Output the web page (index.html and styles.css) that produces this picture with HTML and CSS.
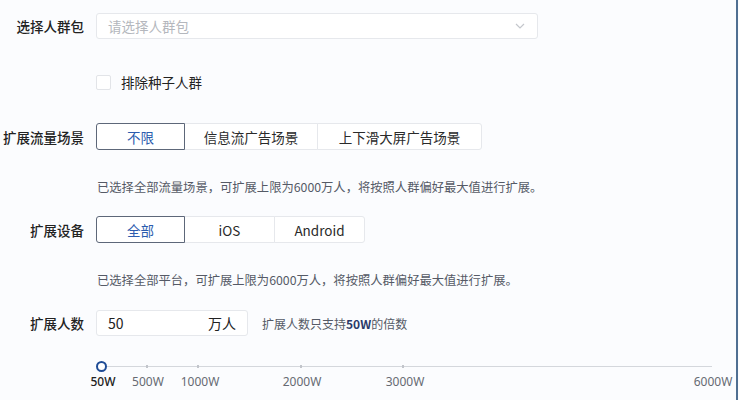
FILE: index.html
```html
<!DOCTYPE html>
<html lang="zh">
<head>
<meta charset="utf-8">
<link rel="stylesheet" href="styles.css">
</head>
<body>
<div class="page">
  <div class="row r-select">
    <div class="label">选择人群包</div>
    <div class="select">
      <span class="placeholder">请选择人群包</span>
      <svg class="chev" width="10" height="6" viewBox="0 0 10 6"><path d="M1 1 L5 5 L9 1" fill="none" stroke="#c4c7cc" stroke-width="1.2"/></svg>
    </div>
  </div>

  <div class="row r-check">
    <div class="label"></div>
    <label class="check"><span class="box"></span><span>排除种子人群</span></label>
  </div>

  <div class="row r-scene">
    <div class="label">扩展流量场景</div>
    <div class="btn-group">
      <div class="btn active w89">不限</div>
      <div class="btn w133">信息流广告场景</div>
      <div class="btn w164">上下滑大屏广告场景</div>
    </div>
  </div>
  <div class="help h1">已选择全部流量场景，可扩展上限为6000万人，将按照人群偏好最大值进行扩展。</div>

  <div class="row r-device">
    <div class="label">扩展设备</div>
    <div class="btn-group">
      <div class="btn active w89">全部</div>
      <div class="btn w90">iOS</div>
      <div class="btn w90">Android</div>
    </div>
  </div>
  <div class="help h2">已选择全部平台，可扩展上限为6000万人，将按照人群偏好最大值进行扩展。</div>

  <div class="row r-count">
    <div class="label">扩展人数</div>
    <div class="num-input"><span class="val">50</span><span class="unit">万人</span></div>
    <div class="hint">扩展人数只支持<span class="strong">50W</span>的倍数</div>
  </div>

  <div class="slider">
    <div class="track"></div>
    <span class="dot" style="left:50px"></span>
    <span class="dot" style="left:101px"></span>
    <span class="dot" style="left:204px"></span>
    <span class="dot" style="left:306px"></span>
    <span class="handle"></span>
    <span class="mark first" style="left:7px">50W</span>
    <span class="mark" style="left:52px">500W</span>
    <span class="mark" style="left:104px">1000W</span>
    <span class="mark" style="left:206px">2000W</span>
    <span class="mark" style="left:309px">3000W</span>
    <span class="mark" style="left:617px">6000W</span>
  </div>
</div>
</body>
</html>
```

FILE: styles.css
```css
html, body {
  margin: 0;
  padding: 0;
  background: #fbfcfe;
}
body {
  font-family: "Noto Sans CJK SC", "Noto Sans", sans-serif;
  color: #222;
}
.page {
  width: 738px;
  height: 400px;
  border-right: 2px solid #4f6f92;
  padding-top: 13px;
  box-sizing: border-box;
  overflow: hidden;
}
.row {
  display: flex;
  align-items: center;
}
.label {
  width: 84px;
  flex: none;
  margin-right: 12px;
  text-align: right;
  font-size: 13.5px;
  font-weight: 500;
  color: #222;
  white-space: nowrap;
}
.r-select { height: 26px; }
.select {
  width: 442px;
  height: 26px;
  box-sizing: border-box;
  border: 1px solid #e6e8ec;
  border-radius: 3px;
  background: #fff;
  display: flex;
  align-items: center;
  justify-content: space-between;
  padding: 0 12px 0 11px;
}
.placeholder {
  font-size: 13.5px;
  color: #b4b7bd;
}
.r-check { margin-top: 36px; height: 14px; }
.check {
  display: flex;
  align-items: center;
  gap: 10px;
  font-size: 13.5px;
  color: #222;
}
.box {
  width: 13px;
  height: 13px;
  border: 1px solid #e2e4e8;
  border-radius: 2px;
  background: #fff;
}
.r-scene { margin-top: 34px; height: 27px; }
.r-device { margin-top: 21px; height: 27px; }
.btn-group { display: flex; }
.btn {
  height: 27px;
  box-sizing: border-box;
  border: 1px solid #e6e8ec;
  background: #fff;
  display: flex;
  align-items: center;
  justify-content: center;
  font-size: 13.5px;
  color: #2a2a2a;
  margin-left: -1px;
}
.btn:first-child { margin-left: 0; border-radius: 3px 0 0 3px; }
.btn:last-child { border-radius: 0 3px 3px 0; }
.btn.active {
  border-color: #5d6779;
  color: #2c5cae;
  position: relative;
  z-index: 1;
}
.w89 { width: 89px; }
.w90 { width: 91px; }
.w133 { width: 134px; }
.w164 { width: 165px; }
.help {
  margin-left: 97px;
  font-size: 12.3px;
  line-height: 16px;
  color: #555a66;
  margin-top: 29px;
}
.r-count { margin-top: 22px; height: 26px; }
.num-input {
  width: 152px;
  height: 26px;
  box-sizing: border-box;
  border: 1px solid #e6e8ec;
  border-radius: 3px;
  background: #fff;
  display: flex;
  align-items: center;
  justify-content: space-between;
  padding: 0 11px 0 11px;
  font-size: 14px;
  color: #222;
}
.hint {
  margin-left: 14px;
  font-size: 12px;
  color: #555a66;
}
.hint .strong { color: #2a3a6a; font-weight: 600; }
.slider {
  position: relative;
  margin-left: 96px;
  margin-top: 25px;
  height: 38px;
}
.track {
  position: absolute;
  left: 5px;
  width: 611px;
  top: 5px;
  height: 1px;
  background: #d4d7dc;
}
.dot {
  position: absolute;
  top: 4px;
  width: 2px;
  height: 3px;
  background: #c2c5cb;
}
.handle {
  position: absolute;
  left: 0;
  top: 0;
  width: 11px;
  height: 11px;
  box-sizing: border-box;
  border: 2.5px solid #1f4c96;
  border-radius: 50%;
  background: #fff;
}
.mark {
  position: absolute;
  top: 14px;
  transform: translateX(-50%);
  font-size: 12px;
  line-height: 14px;
  color: #666a72;
  font-family: "Noto Sans", sans-serif;
  white-space: nowrap;
}
.mark.first { color: #222; font-weight: 500; }
```
